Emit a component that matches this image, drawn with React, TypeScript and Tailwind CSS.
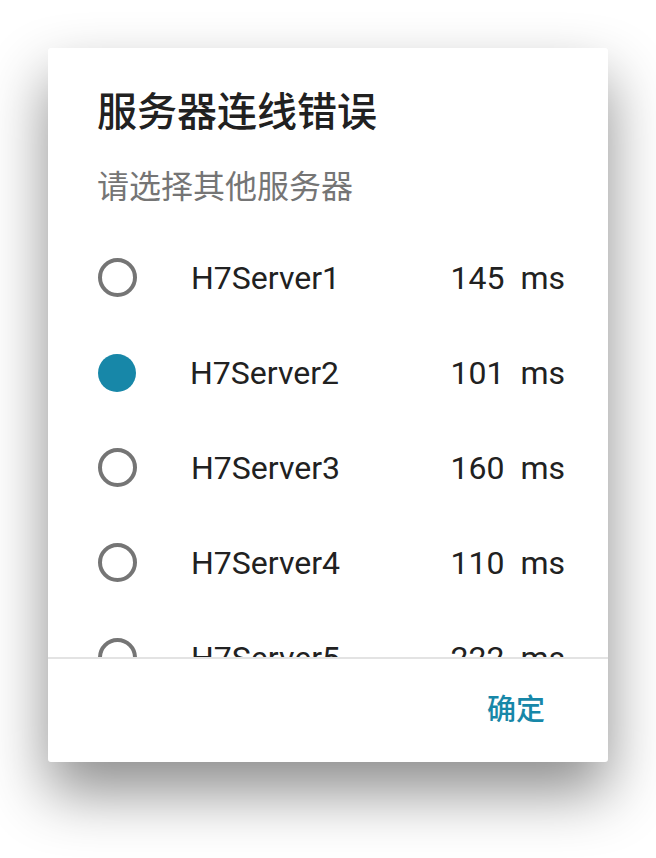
const servers = [
  { name: 'H7Server1', ping: 145 },
  { name: 'H7Server2', ping: 101 },
  { name: 'H7Server3', ping: 160 },
  { name: 'H7Server4', ping: 110 },
  { name: 'H7Server5', ping: 222 },
]

const font = { fontFamily: 'Roboto, "Noto Sans CJK SC", sans-serif' }

export default function App() {
  const selected = 1

  return (
    <div className="w-[656px] h-[858px] bg-white p-[48px]" style={font}>
      <div className="w-[560px] h-[714px] bg-white rounded-[3px] shadow-[0_30px_60px_rgba(0,0,0,0.45)] flex flex-col overflow-hidden">
        {/* Header */}
        <div className="pl-[49px] pt-[41px]">
          <h1 className="text-[40px] leading-[48px] font-medium text-[#212121]">服务器连线错误</h1>
          <p className="mt-[30px] text-[32px] leading-[40px] text-[#757575]">请选择其他服务器</p>
        </div>

        {/* Server list */}
        <div className="mt-[23px] h-[427px] overflow-hidden">
          {servers.map((s, i) => (
            <div key={s.name} className="h-[95px] flex items-center pl-[50px] pr-[43px]">
              {i === selected ? (
                <span className="w-[38px] h-[38px] rounded-full bg-[#1787a8] shrink-0" />
              ) : (
                <span className="w-[39px] h-[39px] rounded-full border-[4px] border-[#757575] shrink-0" />
              )}
              <span className="ml-[54px] text-[32px] text-[#212121] flex-1">{s.name}</span>
              <span className="text-[32px] text-[#212121] whitespace-pre">{s.ping}  ms</span>
            </div>
          ))}
        </div>

        <div className="h-[2px] bg-[#e3e3e3]" />

        {/* Footer */}
        <div className="flex-1 flex items-center justify-end pr-[63px]">
          <button className="text-[29px] font-medium text-[#1787a8]">确定</button>
        </div>
      </div>
    </div>
  )
}
